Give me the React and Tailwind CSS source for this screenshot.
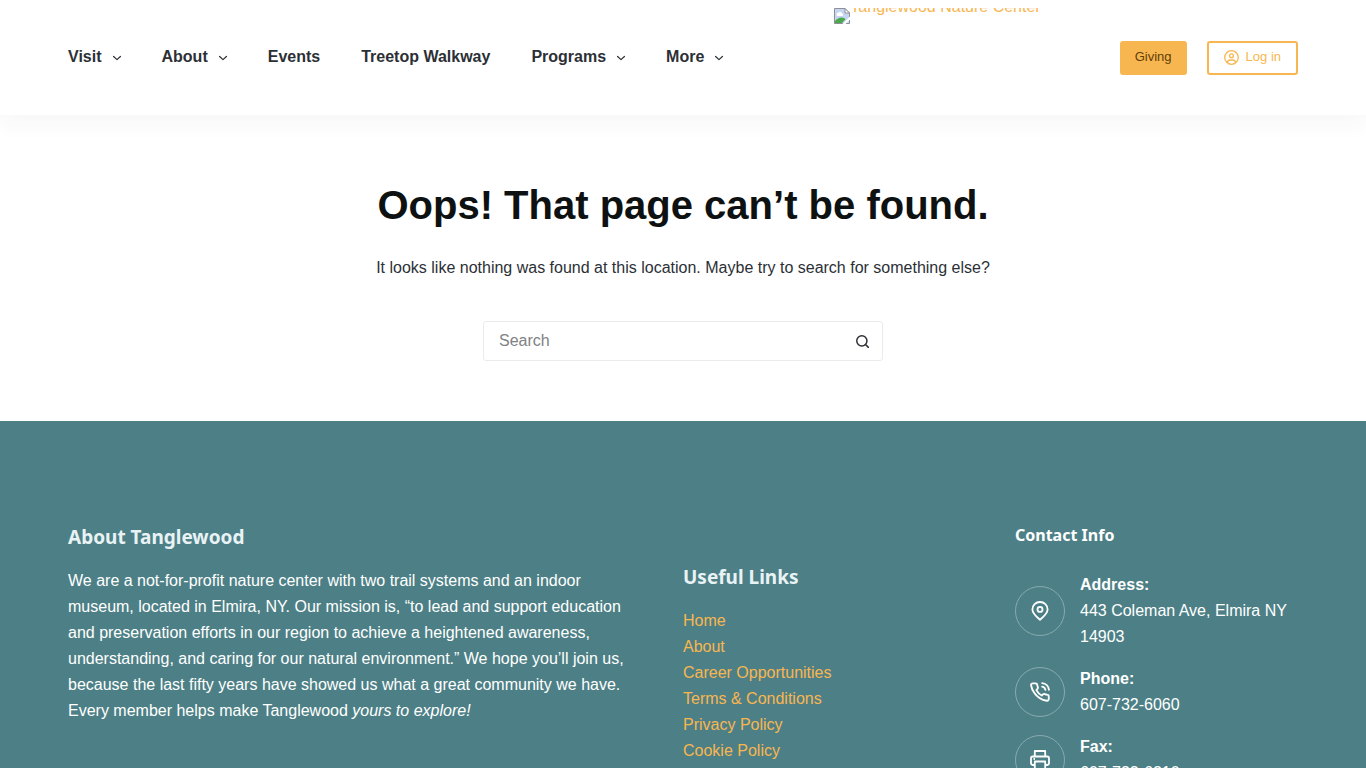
const navItems = [
  { label: 'Visit', menu: true },
  { label: 'About', menu: true },
  { label: 'Events' },
  { label: 'Treetop Walkway' },
  { label: 'Programs', menu: true },
  { label: 'More', menu: true },
];

const usefulLinks = [
  'Home',
  'About',
  'Career Opportunities',
  'Terms & Conditions',
  'Privacy Policy',
  'Cookie Policy',
];

function Chevron() {
  return (
    <svg className="mt-[3px] h-2 w-2" viewBox="0 0 8 8" fill="none" stroke="currentColor" strokeWidth="1.2" strokeLinecap="round" strokeLinejoin="round" aria-hidden="true">
      <path d="M0.6 2.5 4 5.6 7.4 2.5" />
    </svg>
  );
}

function BrokenImage() {
  return (
    <svg className="h-4 w-4 shrink-0" viewBox="0 0 16 16" aria-hidden="true">
      <path d="M0.5 0.5H11L15.5 5V15.5H0.5Z" fill="#c6d6f2" stroke="#8d9096" />
      <path d="M2.5 6.5a1.7 1.7 0 0 1 1.8-1.7 2.2 2.2 0 0 1 4 .9 1.3 1.3 0 0 1 .2 2.3H3.6A1.3 1.3 0 0 1 2.5 6.5Z" fill="#fff" />
      <path d="M1 15V13C3 11 5 9.500 7.500 9.500c2 0 3 .8 4 1.800L8 15Z" fill="#4ba84b" />
      <path d="M11 0.500V5h4.500Z" fill="#fff" stroke="#8d9096" />
      <path d="M16 8.500 8.500 16H11.500L16 11.500Z" fill="#fff" />
    </svg>
  );
}

function UserIcon() {
  return (
    <svg className="h-[15px] w-[15px]" viewBox="0 0 15 15" fill="none" stroke="currentColor" strokeWidth="1.3" aria-hidden="true">
      <circle cx="7.500" cy="7.500" r="6.800" />
      <circle cx="7.500" cy="5.800" r="1.900" />
      <path d="M3.200 12.500C3.800 10.700 5 10 6.200 10h2.600c1.200 0 2.400.7 3 2.500" />
    </svg>
  );
}

function SearchIcon() {
  return (
    <svg className="h-[13px] w-[13px]" viewBox="0 0 14 14" fill="none" stroke="currentColor" strokeWidth="1.600" strokeLinecap="round" aria-hidden="true">
      <circle cx="6.300" cy="6.300" r="5.500" />
      <path d="m10.300 10.300 3 3" />
    </svg>
  );
}

function PinIcon() {
  return (
    <svg className="h-5 w-5" viewBox="0 0 20 20" fill="none" stroke="currentColor" strokeWidth="1.800" aria-hidden="true">
      <path d="M10 18.800C6.500 15.800 2.400 12.300 2.400 8.400a7.600 7.400 0 0 1 15.200 0c0 3.900-4.100 7.400-7.600 10.400Z" strokeLinejoin="round" />
      <circle cx="10" cy="8.400" r="2.500" />
    </svg>
  );
}

function PhoneIcon() {
  return (
    <svg className="h-5 w-5" viewBox="0 0 24 24" fill="none" stroke="currentColor" strokeWidth="2.200" strokeLinecap="round" strokeLinejoin="round" aria-hidden="true">
      <path d="M14.600 5.500A5 5 0 0 1 18.500 9.400M14.600 1.300A9 9 0 0 1 22.700 9.400m-.2 7.800v3.300a2 2 0 0 1-2.180 2 19.790 19.790 0 0 1-8.900-3.200 19.500 19.500 0 0 1-6.100-6.100A19.790 19.790 0 0 1 1.300 3.900 2 2 0 0 1 3.400 1.600h3.300a2 2 0 0 1 2 1.720 12.840 12.840 0 0 0 .7 2.810 2 2 0 0 1-.45 2.110L7.600 9.700a16 16 0 0 0 6.500 6.500l1.400-1.300a2 2 0 0 1 2.110-.45 12.840 12.840 0 0 0 2.900.7 2 2 0 0 1 1.990 2.050Z" />
    </svg>
  );
}

function PrinterIcon() {
  return (
    <svg className="h-5 w-5" viewBox="0 0 20 20" fill="none" stroke="currentColor" strokeWidth="1.800" strokeLinejoin="round" aria-hidden="true">
      <path d="M4.800 6.500V1h10.400v5.500M4.500 15H2.800A1.900 1.900 0 0 1 1 13.100V8.400a1.900 1.900 0 0 1 1.800-1.900h14.400A1.900 1.900 0 0 1 19 8.400v4.700a1.900 1.900 0 0 1-1.800 1.900h-1.700" />
      <path d="M4.800 11.500h10.400V19H4.800Z" />
      <path d="M3.500 9h1.500" />
    </svg>
  );
}

const contacts = [
  { title: 'Address:', text: '443 Coleman Ave, Elmira NY 14903', Icon: PinIcon },
  { title: 'Phone:', text: '607-732-6060', Icon: PhoneIcon },
  { title: 'Fax:', text: '607-732-6210', Icon: PrinterIcon },
];

export default function App() {
  return (
    <div className="flex min-h-screen flex-col bg-white font-['Liberation_Sans',Arial,sans-serif] text-base text-[#2c3036]">
      <header className="relative bg-white shadow-[0_10px_20px_rgba(44,62,80,0.04)]">
        <div className="mx-auto flex h-[115px] w-full max-w-[1230px] items-center">
          <nav aria-label="Main" className="flex items-center gap-[41px] pb-[2px] font-bold">
            {navItems.map(({ label, menu }) => (
              <a key={label} href="#" className="flex items-center gap-[11px] whitespace-nowrap">
                {label}
                {menu && <Chevron />}
              </a>
            ))}
          </nav>
          <a href="#" className="ml-[111px] flex self-start pt-2 text-[#f8b650]" aria-label="Tanglewood Nature Center">
            <BrokenImage />
            <span className="flex h-[9px] items-end overflow-hidden leading-5 whitespace-nowrap">Tanglewood Nature Center</span>
          </a>
          <div className="ml-auto flex items-center gap-5 text-[13px]">
            <button type="button" className="h-[34px] rounded-[3px] bg-[#f8b650] px-[15px] pb-[2px] text-[#5f3f08]">Giving</button>
            <button type="button" className="flex h-[34px] items-center gap-[7px] rounded-[3px] border-2 border-[#f8b650] px-[15px] text-[#f8b650]">
              <UserIcon />
              <span className="pb-[2px]">Log in</span>
            </button>
          </div>
        </div>
      </header>

      <main className="flex flex-col items-center px-5 pt-[66px] pb-[60px] text-center">
        <h1 className="text-[40px] leading-[48px] font-bold text-[#0e1111]">Oops! That page can’t be found.</h1>
        <p className="mt-[26px] leading-[26px]">It looks like nothing was found at this location. Maybe try to search for something else?</p>
        <form role="search" className="mt-10 flex h-10 w-full max-w-[400px] items-center rounded-[3px] border border-[#e9ebec]" onSubmit={(e) => e.preventDefault()}>
          <input type="search" aria-label="Search" placeholder="Search" className="h-full min-w-0 flex-1 bg-transparent pl-[15px] outline-none placeholder:text-[#808285]" />
          <button type="submit" aria-label="Submit search" className="flex h-full w-10 items-center justify-center">
            <SearchIcon />
          </button>
        </form>
      </main>

      <footer className="flex-1 bg-[#4d8086] text-white">
        <div className="mx-auto grid w-full max-w-[1230px] grid-cols-[556fr_273fr_283fr] gap-x-[59px] pt-[100px] pb-[70px]">
          <section className="leading-[26px]">
            <h2 className="mt-1 font-['Noto_Sans',sans-serif] text-[19px] leading-6 font-bold text-[#e9f3f5]">About Tanglewood</h2>
            <p className="mt-[19px]">
              We are a not-for-profit nature center with two trail systems and an indoor museum, located in Elmira, NY. Our mission is, “to lead and support education and preservation efforts in our region to achieve a heightened awareness, understanding, and caring for our natural environment.” We hope you’ll join us, because the last fifty years have showed us what a great community we have. Every member helps make Tanglewood <em>yours to explore!</em>
            </p>
          </section>
          <section className="pt-10 leading-[26px]">
            <h2 className="mt-1 font-['Noto_Sans',sans-serif] text-[19px] leading-6 font-bold text-[#e9f3f5]">Useful Links</h2>
            <ul className="mt-[19px]">
              {usefulLinks.map((label) => (
                <li key={label}>
                  <a href="#" className="text-[#f8b650]">{label}</a>
                </li>
              ))}
            </ul>
          </section>
          <section className="leading-[26px]">
            <h2 className="mt-1 font-['Noto_Sans',sans-serif] text-base leading-5 font-bold">Contact Info</h2>
            <ul className="mt-[27px] flex flex-col gap-4">
              {contacts.map(({ title, text, Icon }) => (
                <li key={title} className="flex items-center gap-[15px]">
                  <span className="flex h-[50px] w-[50px] shrink-0 items-center justify-center rounded-full border border-[#88abaf]">
                    <Icon />
                  </span>
                  <div>
                    <strong className="block">{title}</strong>
                    {text}
                  </div>
                </li>
              ))}
            </ul>
          </section>
        </div>
      </footer>
    </div>
  );
}
